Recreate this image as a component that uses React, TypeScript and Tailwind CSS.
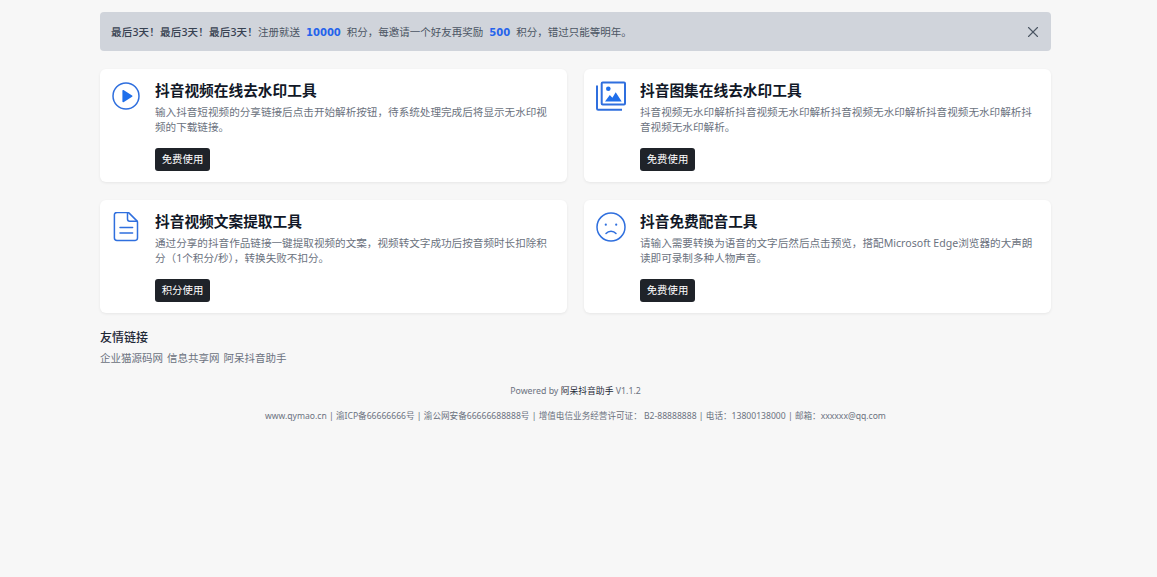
import { X } from "lucide-react";
import type { ReactNode } from "react";

const fontStack = "font-['Noto_Sans','Noto_Sans_CJK_SC',sans-serif]";

function PlayIcon() {
  return (
    <svg viewBox="0 0 30 30" className="h-[30px] w-[30px]" fill="none">
      <circle cx="15" cy="15" r="13" stroke="#2f6fde" strokeWidth="1.5" />
      <path d="M11.4 9.600c0-.6.6-.9 1.100-.6l8.600 5.500c.5.3.5.9 0 1.200l-8.600 5.500c-.5.3-1.100 0-1.100-.6z" fill="#1f6feb" />
    </svg>
  );
}

function ImagesIcon() {
  return (
    <svg viewBox="0 0 30 30" className="h-[30px] w-[30px]" fill="none">
      <rect x="5.700" y="1.500" width="23.300" height="22" rx="1" stroke="#2f6fde" strokeWidth="2" />
      <path d="M1 4.500v23c0 .7.5 1.200 1.200 1.200H26" stroke="#2f6fde" strokeWidth="2" />
      <circle cx="12.300" cy="7.800" r="2.300" fill="#1f6feb" />
      <path d="M9 20.500l4.800-6.600 2.600 2.800 3.300-5.400 6 9.200z" fill="#1f6feb" />
    </svg>
  );
}

function DocIcon() {
  return (
    <svg viewBox="0 0 30 30" className="h-[30px] w-[30px]" fill="none" stroke="#2f6fde" strokeWidth="1.500" strokeLinejoin="round">
      <path d="M6 .4h10.600c.5 0 .9.2 1.300.5l8 8c.4.4.6.8.6 1.300v15.900c0 1.300-1 2.300-2.300 2.300H6c-1.500 0-2.600-1-2.600-2.400V2.800C3.400 1.400 4.500.4 6 .4z" />
      <path d="M16.500.5v6.600c0 1.200.9 2.100 2.100 2.100h7.800" />
      <path d="M9 15.500h12.600M9 20.900h12.600" strokeLinecap="round" />
    </svg>
  );
}

function FrownIcon() {
  return (
    <svg viewBox="0 0 30 30" className="h-[30px] w-[30px]" fill="none">
      <circle cx="15" cy="15" r="14" stroke="#2f6fde" strokeWidth="1.500" />
      <circle cx="9.800" cy="12.700" r="1.100" fill="#2f6fde" />
      <circle cx="20.200" cy="12.700" r="1.100" fill="#2f6fde" />
      <path d="M10 21.500c1.300-1.500 3-2.300 5-2.300s3.700.8 5 2.300" stroke="#2f6fde" strokeWidth="1.500" strokeLinecap="round" />
    </svg>
  );
}

const tools: { title: string; desc: string; action: string; icon: ReactNode; inset: string }[] = [
  {
    title: "抖音视频在线去水印工具",
    desc: "输入抖音短视频的分享链接后点击开始解析按钮，待系统处理完成后将显示无水印视频的下载链接。",
    action: "免费使用",
    icon: <PlayIcon />,
    inset: "pl-[11px]",
  },
  {
    title: "抖音图集在线去水印工具",
    desc: "抖音视频无水印解析抖音视频无水印解析抖音视频无水印解析抖音视频无水印解析抖音视频无水印解析。",
    action: "免费使用",
    icon: <ImagesIcon />,
    inset: "pl-3",
  },
  {
    title: "抖音视频文案提取工具",
    desc: "通过分享的抖音作品链接一键提取视频的文案，视频转文字成功后按音频时长扣除积分（1个积分/秒），转换失败不扣分。",
    action: "积分使用",
    icon: <DocIcon />,
    inset: "pl-[11px]",
  },
  {
    title: "抖音免费配音工具",
    desc: "请输入需要转换为语音的文字后然后点击预览，搭配Microsoft Edge浏览器的大声朗读即可录制多种人物声音。",
    action: "免费使用",
    icon: <FrownIcon />,
    inset: "pl-3",
  },
];

export default function App() {
  return (
    <div className={`min-h-screen bg-[#f7f7f7] ${fontStack}`}>
      <div className="w-[1151px]">
        <main className="mx-auto w-[951px] pt-3">
          <div className="flex h-[39px] items-center justify-between rounded bg-[#d0d4db] pl-[11px] pr-[9px]">
            <p className="pt-[2px] text-[10.5px] text-[#4b5563]">
              <span className="font-medium tracking-[0.2px] text-[#374151]">最后3天！最后3天！最后3天！</span>
              注册就送
              <span className="mx-[6px] font-['DejaVu_Sans'] text-[10px] font-bold text-[#2563eb]">10000</span>
              积分，每邀请一个好友再奖励
              <span className="mx-[6px] font-['DejaVu_Sans'] text-[10px] font-bold text-[#2563eb]">500</span>
              积分，错过只能等明年。
            </p>
            <X className="h-[18px] w-[18px] text-[#4b5563]" strokeWidth={1.5} />
          </div>

          <div className="mt-[18px] grid grid-cols-2 gap-x-[17px] gap-y-[18px]">
            {tools.map((tool) => (
              <section key={tool.title} className={`flex h-[113px] gap-[14px] rounded-md bg-white pr-[18px] pt-[11px] shadow-[0_1px_3px_rgba(0,0,0,0.07)] ${tool.inset}`}>
                <div className="shrink-0 pt-[1px]">{tool.icon}</div>
                <div className="min-w-0 flex-1">
                  <h2 className="text-[14.7px] leading-[20px] font-bold text-[#111827]">{tool.title}</h2>
                  <p className="mt-[5px] text-[10.6px] leading-[15px] text-[#6b7280]">{tool.desc}</p>
                  <button type="button" className="mt-[13px] flex h-[23px] w-[55px] items-center justify-center rounded-[3px] bg-[#1f2329] text-[10.4px] text-white">
                    {tool.action}
                  </button>
                </div>
              </section>
            ))}
          </div>

          <section className="mt-4">
            <h3 className="text-[12px] leading-[18px] font-medium text-[#1f2937]">友情链接</h3>
            <div className="mt-[3px] flex gap-[4px] text-[10.5px] leading-[16px] text-[#6b7280]">
              <a>企业猫源码网</a>
              <a>信息共享网</a>
              <a>阿呆抖音助手</a>
            </div>
          </section>

          <footer className="mt-[18px] text-center text-[#6b7280]">
            <p className="text-[8.8px] leading-[14px]">
              Powered by <span className="text-[#1f2937]">阿呆抖音助手</span> V1.1.2
            </p>
            <p className="mt-[11px] text-[8.6px] leading-[14px]">
              www.qymao.cn | 渝ICP备66666666号 | 渝公网安备66666688888号 | 增值电信业务经营许可证： B2-88888888 | 电话：13800138000 | 邮箱：xxxxxx@qq.com
            </p>
          </footer>
        </main>
      </div>
    </div>
  );
}
